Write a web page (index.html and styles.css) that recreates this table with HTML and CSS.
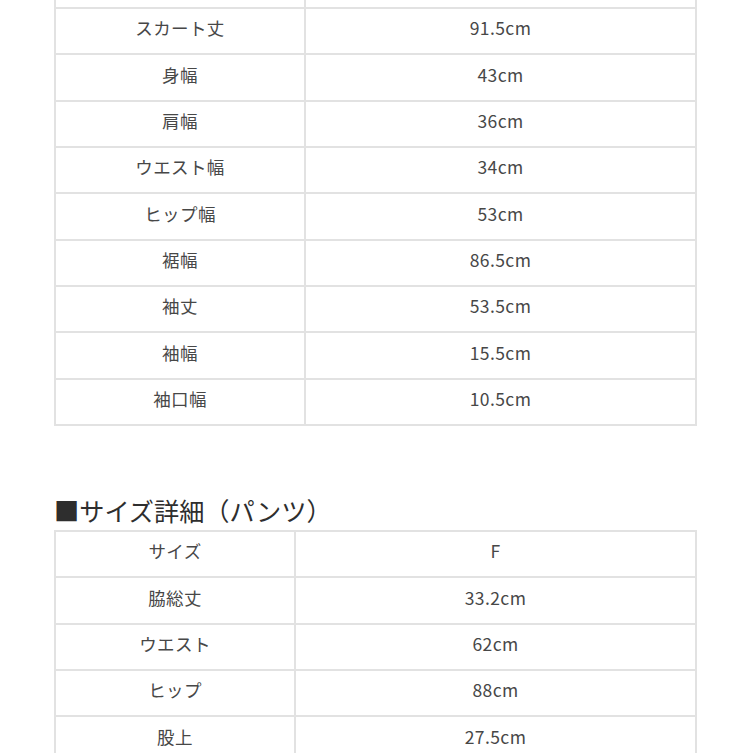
FILE: index.html
```html
<!DOCTYPE html>
<html lang="ja">
<head>
<meta charset="utf-8">
<link rel="stylesheet" href="styles.css">
</head>
<body>
<div class="page">
  <div class="sheet sheet-top">
    <div class="cell"></div><div class="cell"></div>
    <div class="cell">スカート丈</div><div class="cell">91.5cm</div>
    <div class="cell">身幅</div><div class="cell">43cm</div>
    <div class="cell">肩幅</div><div class="cell">36cm</div>
    <div class="cell">ウエスト幅</div><div class="cell">34cm</div>
    <div class="cell">ヒップ幅</div><div class="cell">53cm</div>
    <div class="cell">裾幅</div><div class="cell">86.5cm</div>
    <div class="cell">袖丈</div><div class="cell">53.5cm</div>
    <div class="cell">袖幅</div><div class="cell">15.5cm</div>
    <div class="cell">袖口幅</div><div class="cell">10.5cm</div>
  </div>

  <h2 class="heading">■サイズ詳細（パンツ）</h2>

  <div class="sheet sheet-pants">
    <div class="cell">サイズ</div><div class="cell">F</div>
    <div class="cell">脇総丈</div><div class="cell">33.2cm</div>
    <div class="cell">ウエスト</div><div class="cell">62cm</div>
    <div class="cell">ヒップ</div><div class="cell">88cm</div>
    <div class="cell">股上</div><div class="cell">27.5cm</div>
  </div>
</div>
</body>
</html>
```

FILE: styles.css
```css
html, body {
  margin: 0;
  padding: 0;
  background: #ffffff;
  overflow: hidden;
}

.page {
  width: 753px;
  height: 753px;
  overflow: hidden;
  padding-left: 54px;
  box-sizing: border-box;
  font-family: "Noto Sans CJK JP", "Noto Sans", sans-serif;
  color: #474747;
}

.sheet {
  display: grid;
  gap: 2px;
  padding: 2px;
  background: #e2e2e2;
  width: 643px;
  box-sizing: border-box;
  grid-auto-rows: 44.33px;
}

.sheet-top {
  grid-template-columns: 248px 389px;
  margin-top: -39.33px;
}

.sheet-pants {
  grid-template-columns: 238px 399px;
}

.cell {
  background: #ffffff;
  display: flex;
  align-items: center;
  justify-content: center;
  font-size: 17.5px;
  letter-spacing: 0.4px;
  line-height: 1;
  padding-bottom: 6px;
  box-sizing: border-box;
}

.heading {
  margin: 69px 0 5px 0;
  height: 30px;
  line-height: 30px;
  font-size: 25.2px;
  font-weight: normal;
  color: #2e2e2e;
  letter-spacing: 0;
  white-space: nowrap;
}
```
